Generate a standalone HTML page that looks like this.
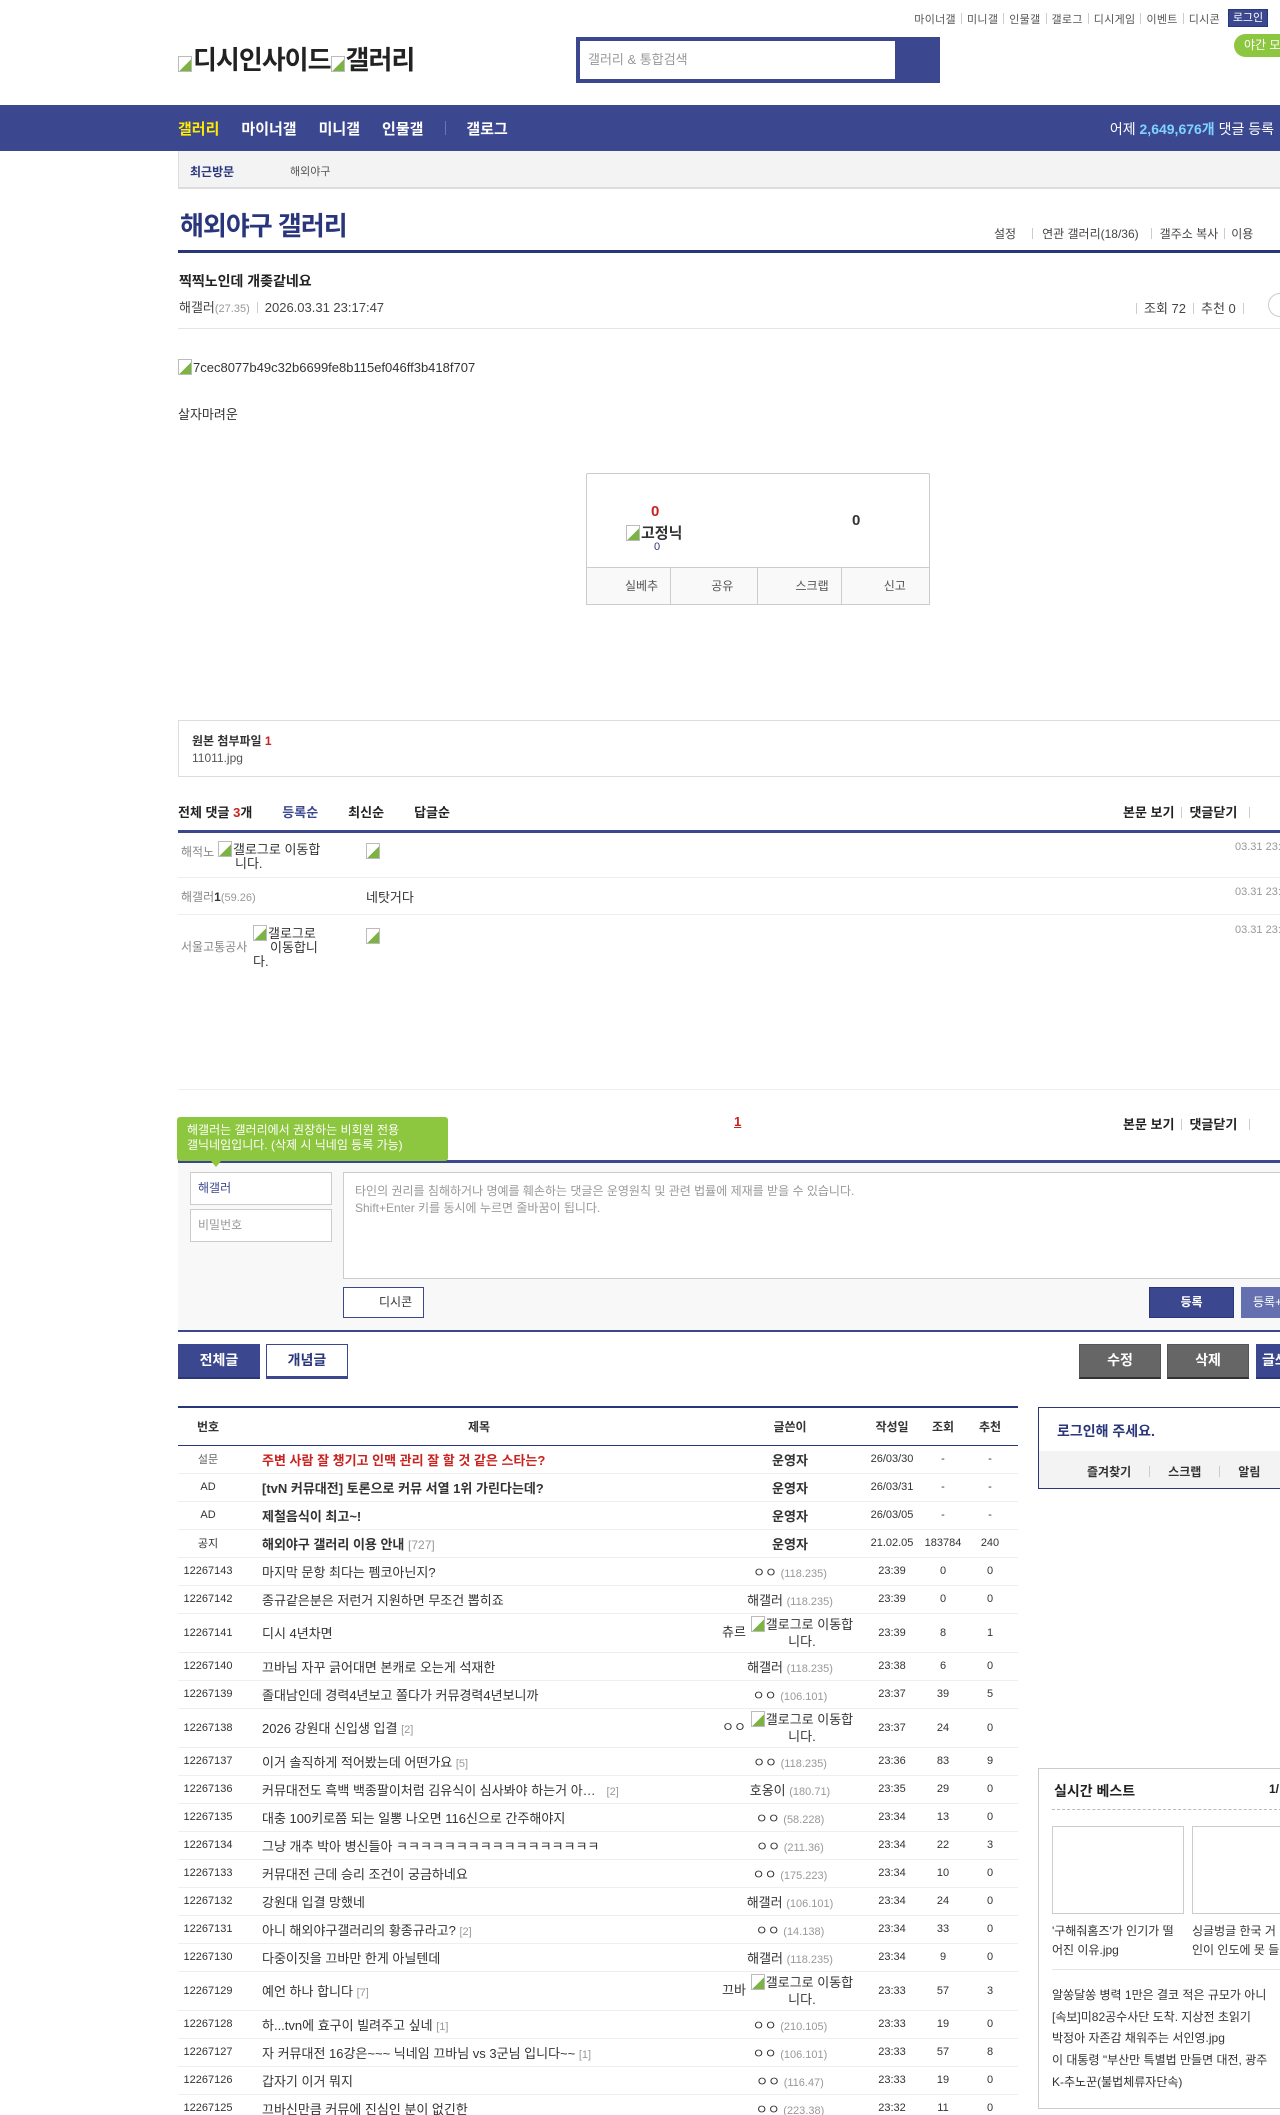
<!DOCTYPE html>
<html><head><meta charset="utf-8">
<style>
*{margin:0;padding:0;box-sizing:border-box}
html,body{width:1280px;height:2115px;overflow:hidden;background:#fff}
body{position:relative;font-family:"Liberation Sans","Noto Sans CJK KR",sans-serif;color:#333;font-size:12px}
.a{position:absolute;white-space:nowrap}
.bi{display:inline-block;width:14px;height:16px;border:1px solid #bbb;background:linear-gradient(135deg,#fff 55%,#7cb342 56%);vertical-align:-3px;margin-right:1px}
.sep{display:inline-block;width:1px;height:11px;background:#ccc;margin:0 7px;vertical-align:-1px}
table{border-collapse:collapse;table-layout:fixed}
td,th{text-align:center;font-size:11px;color:#333;border-bottom:1px solid #eee;padding:0;vertical-align:middle}
th{font-size:12px;font-weight:bold;height:38px;border-bottom:1px solid #29367c}
td.t{text-align:left;padding-left:24px;font-size:13px;color:#333;white-space:nowrap;overflow:hidden}
td.b{font-weight:bold;color:#333}
.ip{color:#999;font-size:11px}
.rp{color:#999;font-size:11px}
tr{height:28px}
tr.tall{height:39px}
.w{font-size:13px}
.gl{display:inline-block;width:112px;text-align:center;white-space:normal;line-height:17px;vertical-align:middle;font-size:13px}
</style></head><body>

<!-- top links -->
<div class="a" style="right:60px;top:11px;font-size:11px;color:#555;letter-spacing:0.3px">마이너갤<span class="sep" style="margin:0 5px"></span>미니갤<span class="sep" style="margin:0 5px"></span>인물갤<span class="sep" style="margin:0 5px"></span>갤로그<span class="sep" style="margin:0 5px"></span>디시게임<span class="sep" style="margin:0 5px"></span>이벤트<span class="sep" style="margin:0 5px"></span>디시콘</div>
<div class="a" style="left:1228px;top:9px;width:40px;height:18px;background:#3b4890;border:1px solid #29367c;color:#fff;font-size:11px;text-align:center;line-height:16px">로그인</div>
<div class="a" style="left:1234px;top:34px;width:60px;height:23px;background:#8dc63f;border-radius:12px;color:#fff;font-size:12px;line-height:23px;padding-left:10px">야간 모드</div>

<!-- logo -->
<div class="a" style="left:178px;top:40px;font-size:26px;color:#222;font-weight:bold;letter-spacing:-1px"><span class="bi"></span>디시인사이드<span class="bi"></span>갤러리</div>

<!-- search -->
<div class="a" style="left:576px;top:37px;width:364px;height:46px;background:#3b4890"></div>
<div class="a" style="left:580px;top:41px;width:315px;height:38px;background:#fff;color:#999;font-size:13px;line-height:38px;padding-left:8px">갤러리 &amp; 통합검색</div>

<!-- nav -->
<div class="a" style="left:0;top:105px;width:1280px;height:46px;background:#3b4890"></div>
<div class="a" style="left:178px;top:118px;font-size:15px;font-weight:bold;color:#fff"><span style="color:#ffea00">갤러리</span><span style="margin-left:22px">마이너갤</span><span style="margin-left:22px">미니갤</span><span style="margin-left:22px">인물갤</span><span style="display:inline-block;width:1px;height:14px;background:#6a76b0;margin:0 20px 0 22px;vertical-align:-1px"></span>갤로그</div>
<div class="a" style="right:6px;top:119px;font-size:14px;color:#fff">어제 <b style="color:#7fd4ff">2,649,676개</b> 댓글 등록</div>

<!-- recent -->
<div class="a" style="left:178px;top:151px;width:1102px;height:38px;background:#f3f3f3;border-bottom:2px solid #ddd;border-left:1px solid #ddd"></div>
<div class="a" style="left:190px;top:163px;font-size:12px;font-weight:bold;color:#29367c">최근방문</div>
<div class="a" style="left:290px;top:163px;font-size:11px;color:#555">해외야구</div>

<!-- title -->
<div class="a" style="left:180px;top:206px;font-size:26px;font-weight:bold;color:#29367c;letter-spacing:-1px">해외야구 갤러리</div>
<div class="a" style="left:994px;top:225px;font-size:12px;color:#444">설정<span class="sep" style="margin:0 9px 0 16px"></span>연관 갤러리(18/36)<span class="sep" style="margin:0 8px 0 12px"></span>갤주소 복사<span class="sep" style="margin:0 6px"></span>이용</div>
<div class="a" style="left:178px;top:250px;width:1102px;height:3px;background:#29367c"></div>

<div class="a" style="left:179px;top:271px;font-size:14px;font-weight:bold;color:#222">찍찍노인데 개좆같네요</div>
<div class="a" style="left:179px;top:297px;font-size:13px;color:#444">해갤러<span style="font-size:11px;color:#999">(27.35)</span><span class="sep"></span>2026.03.31 23:17:47</div>
<div class="a" style="left:1136px;top:298px;font-size:13px;color:#444"><span class="sep" style="margin-left:0"></span>조회 72<span class="sep"></span>추천 0<span class="sep"></span></div>
<div class="a" style="left:1268px;top:293px;width:24px;height:24px;border:1px solid #ccc;border-radius:12px"></div>
<div class="a" style="left:178px;top:328px;width:1102px;height:1px;background:#e5e5e5"></div>

<div class="a" style="left:178px;top:359px;font-size:13px;color:#333"><span class="bi"></span>7cec8077b49c32b6699fe8b115ef046ff3b418f707</div>
<div class="a" style="left:178px;top:404px;font-size:13px;color:#333">살자마려운</div>

<!-- recommend box -->
<div class="a" style="left:586px;top:473px;width:344px;height:132px;border:1px solid #ccc;border-radius:2px"></div>
<div class="a" style="left:651px;top:503px;font-size:15px;font-weight:bold;color:#c9221f">0</div>
<div class="a" style="left:626px;top:522px;font-size:15px;font-weight:bold;color:#333"><span class="bi"></span>고정닉</div>
<div class="a" style="left:654px;top:541px;font-size:11px;color:#29367c">0</div>
<div class="a" style="left:852px;top:512px;font-size:15px;font-weight:bold;color:#333">0</div>
<div class="a" style="left:586px;top:567px;width:344px;height:38px;border:1px solid #ccc;background:#f9f9f9;display:flex;font-size:12px;color:#555">
<div style="flex:1;border-right:1px solid #ccc;line-height:36px;padding-left:38px">실베추</div>
<div style="flex:1;border-right:1px solid #ccc;line-height:36px;padding-left:40px">공유</div>
<div style="flex:1;border-right:1px solid #ccc;line-height:36px;padding-left:38px">스크랩</div>
<div style="flex:1;line-height:36px;padding-left:42px">신고</div></div>

<!-- attachment -->
<div class="a" style="left:178px;top:720px;width:1110px;height:57px;border:1px solid #ddd"></div>
<div class="a" style="left:192px;top:732px;font-size:12px;font-weight:bold;color:#333">원본 첨부파일 <span style="color:#c9221f">1</span></div>
<div class="a" style="left:192px;top:751px;font-size:12px;color:#555">11011.jpg</div>

<!-- comments -->
<div class="a" style="left:178px;top:802px;font-size:13px;font-weight:bold;color:#222">전체 댓글 <span style="color:#c9221f">3</span>개<span style="color:#3b4890;margin-left:30px">등록순</span><span style="margin-left:30px">최신순</span><span style="margin-left:30px">답글순</span></div>
<div class="a" style="left:1123px;top:802px;font-size:13px;font-weight:bold;color:#222">본문 보기<span class="sep"></span>댓글닫기<span class="sep" style="margin-left:12px"></span></div>
<div class="a" style="left:178px;top:830px;width:1102px;height:3px;background:#3b4890"></div>
<div class="a" style="left:181px;top:843px;font-size:12px;color:#888">해적노</div>
<div class="a" style="left:218px;top:841px;font-size:13px;color:#333;line-height:14px;width:110px;white-space:normal"><span class="bi"></span>갤로그로 이동합<br><span style="padding-left:17px">니다.</span></div>
<div class="a" style="left:366px;top:843px"><span class="bi"></span></div>
<div class="a" style="left:1235px;top:841px;font-size:11px;color:#999">03.31 23:</div>
<div class="a" style="left:178px;top:877px;width:1102px;height:1px;background:#eee"></div>
<div class="a" style="left:181px;top:888px;font-size:12px;color:#888">해갤러<b style="color:#333">1</b><span style="font-size:11px;color:#999">(59.26)</span></div>
<div class="a" style="left:366px;top:887px;font-size:13px;color:#333">네탓거다</div>
<div class="a" style="left:1235px;top:886px;font-size:11px;color:#999">03.31 23:</div>
<div class="a" style="left:178px;top:914px;width:1102px;height:1px;background:#eee"></div>
<div class="a" style="left:181px;top:938px;font-size:12px;color:#888">서울고통공사</div>
<div class="a" style="left:253px;top:925px;font-size:13px;color:#333;line-height:14px;width:80px;white-space:normal"><span class="bi"></span>갤로그로<br><span style="padding-left:17px">이동합니</span><br>다.</div>
<div class="a" style="left:366px;top:928px"><span class="bi"></span></div>
<div class="a" style="left:1235px;top:924px;font-size:11px;color:#999">03.31 23:</div>
<div class="a" style="left:178px;top:1089px;width:1102px;height:1px;background:#eee"></div>

<div class="a" style="left:734px;top:1114px;font-size:13px;font-weight:bold;color:#c9221f;text-decoration:underline">1</div>
<div class="a" style="left:1123px;top:1114px;font-size:13px;font-weight:bold;color:#222">본문 보기<span class="sep"></span>댓글닫기<span class="sep" style="margin-left:12px"></span></div>

<!-- comment form -->
<div class="a" style="left:178px;top:1160px;width:1102px;height:3px;background:#3b4890"></div>
<div class="a" style="left:178px;top:1163px;width:1102px;height:167px;background:#f8f8f8"></div>
<div class="a" style="left:177px;top:1117px;width:271px;height:44px;background:#8dc63f;border-radius:3px;color:#fff;font-size:12px;line-height:15px;padding:6px 10px">해갤러는 갤러리에서 권장하는 비회원 전용<br>갤닉네임입니다. (삭제 시 닉네임 등록 가능)</div>
<div class="a" style="left:211px;top:1161px;width:0;height:0;border-left:5px solid transparent;border-right:5px solid transparent;border-top:6px solid #8dc63f"></div>
<div class="a" style="left:190px;top:1172px;width:142px;height:33px;border:1px solid #ccc;background:#fff;font-size:12px;color:#3b4890;line-height:31px;padding-left:7px">해갤러</div>
<div class="a" style="left:190px;top:1209px;width:142px;height:33px;border:1px solid #ccc;background:#fff;font-size:12px;color:#999;line-height:31px;padding-left:7px">비밀번호</div>
<div class="a" style="left:343px;top:1172px;width:945px;height:107px;border:1px solid #ccc;background:#fff;font-size:12px;color:#999;line-height:17px;padding:10px 11px;white-space:normal">타인의 권리를 침해하거나 명예를 훼손하는 댓글은 운영원칙 및 관련 법률에 제재를 받을 수 있습니다.<br>Shift+Enter 키를 동시에 누르면 줄바꿈이 됩니다.</div>
<div class="a" style="left:343px;top:1287px;width:81px;height:31px;border:1px solid #3b4890;background:#fff;font-size:12px;color:#333;line-height:29px;padding-left:35px">디시콘</div>
<div class="a" style="left:1149px;top:1287px;width:85px;height:31px;background:#3b4890;border:1px solid #29367c;color:#fff;font-size:12px;font-weight:bold;line-height:29px;text-align:center">등록</div>
<div class="a" style="left:1241px;top:1287px;width:85px;height:31px;background:#6470b0;color:#fff;font-size:12px;line-height:31px;padding-left:12px">등록+추천</div>
<div class="a" style="left:178px;top:1330px;width:1102px;height:2px;background:#3b4890"></div>

<!-- buttons -->
<div class="a" style="left:178px;top:1344px;width:82px;height:35px;background:#3b4890;border-bottom:2px solid #29367c;color:#fff;font-size:14px;font-weight:bold;text-align:center;line-height:33px">전체글</div>
<div class="a" style="left:266px;top:1344px;width:82px;height:35px;background:#fff;border:1px solid #3b4890;border-bottom:3px solid #3b4890;color:#29367c;font-size:14px;font-weight:bold;text-align:center;line-height:31px">개념글</div>
<div class="a" style="left:1079px;top:1344px;width:82px;height:35px;background:#666;border:1px solid #555;border-bottom:2px solid #333;color:#fff;font-size:14px;font-weight:bold;text-align:center;line-height:31px">수정</div>
<div class="a" style="left:1167px;top:1344px;width:82px;height:35px;background:#666;border:1px solid #555;border-bottom:2px solid #333;color:#fff;font-size:14px;font-weight:bold;text-align:center;line-height:31px">삭제</div>
<div class="a" style="left:1256px;top:1344px;width:82px;height:35px;background:#3b4890;border-bottom:2px solid #29367c;color:#fff;font-size:14px;font-weight:bold;line-height:33px;padding-left:6px">글쓰기</div>

<!-- list table -->
<table class="a" style="left:178px;top:1406px;width:840px;border-top:2px solid #29367c">
<colgroup><col style="width:60px"><col style="width:482px"><col style="width:140px"><col style="width:64px"><col style="width:38px"><col style="width:56px"></colgroup>
<tr><th>번호</th><th>제목</th><th>글쓴이</th><th>작성일</th><th>조회</th><th>추천</th></tr>
<tr><td style="color:#666">설문</td><td class="t" style="font-weight:bold;color:#c9221f">주변 사람 잘 챙기고 인맥 관리 잘 할 것 같은 스타는?</td><td class="b w">운영자</td><td>26/03/30</td><td>-</td><td>-</td></tr>
<tr><td>AD</td><td class="t" style="font-weight:bold">[tvN 커뮤대전] 토론으로 커뮤 서열 1위 가린다는데?</td><td class="b w">운영자</td><td>26/03/31</td><td>-</td><td>-</td></tr>
<tr><td>AD</td><td class="t" style="font-weight:bold">제철음식이 최고~!</td><td class="b w">운영자</td><td>26/03/05</td><td>-</td><td>-</td></tr>
<tr><td>공지</td><td class="t" style="font-weight:bold">해외야구 갤러리 이용 안내 <span class="rp" style="font-weight:normal;font-size:12px">[727]</span></td><td class="b w">운영자</td><td>21.02.05</td><td>183784</td><td>240</td></tr>
<tr><td>12267143</td><td class="t">마지막 문항 최다는 펨코아닌지?</td><td class="w">ㅇㅇ <span class="ip">(118.235)</span></td><td>23:39</td><td>0</td><td>0</td></tr>
<tr><td>12267142</td><td class="t">종규같은분은 저런거 지원하면 무조건 뽑히죠</td><td class="w">해갤러 <span class="ip">(118.235)</span></td><td>23:39</td><td>0</td><td>0</td></tr>
<tr class="tall"><td>12267141</td><td class="t">디시 4년차면</td><td class="w">츄르<span class="gl"><span class="bi"></span>갤로그로 이동합니다.</span></td><td>23:39</td><td>8</td><td>1</td></tr>
<tr><td>12267140</td><td class="t">끄바님 자꾸 긁어대면 본캐로 오는게 석재한</td><td class="w">해갤러 <span class="ip">(118.235)</span></td><td>23:38</td><td>6</td><td>0</td></tr>
<tr><td>12267139</td><td class="t">졸대남인데 경력4년보고 쫄다가 커뮤경력4년보니까</td><td class="w">ㅇㅇ <span class="ip">(106.101)</span></td><td>23:37</td><td>39</td><td>5</td></tr>
<tr class="tall"><td>12267138</td><td class="t">2026 강원대 신입생 입결 <span class="rp">[2]</span></td><td class="w">ㅇㅇ<span class="gl"><span class="bi"></span>갤로그로 이동합니다.</span></td><td>23:37</td><td>24</td><td>0</td></tr>
<tr><td>12267137</td><td class="t">이거 솔직하게 적어봤는데 어떤가요 <span class="rp">[5]</span></td><td class="w">ㅇㅇ <span class="ip">(118.235)</span></td><td>23:36</td><td>83</td><td>9</td></tr>
<tr><td>12267136</td><td class="t">커뮤대전도 흑백 백종팔이처럼 김유식이 심사봐야 하는거 아…&nbsp;&nbsp;&nbsp;<span class="rp">[2]</span></td><td class="w">호옹이 <span class="ip">(180.71)</span></td><td>23:35</td><td>29</td><td>0</td></tr>
<tr><td>12267135</td><td class="t">대충 100키로쯤 되는 일뽕 나오면 116신으로 간주해야지</td><td class="w">ㅇㅇ <span class="ip">(58.228)</span></td><td>23:34</td><td>13</td><td>0</td></tr>
<tr><td>12267134</td><td class="t">그냥 개추 박아 병신들아 ㅋㅋㅋㅋㅋㅋㅋㅋㅋㅋㅋㅋㅋㅋㅋㅋㅋ</td><td class="w">ㅇㅇ <span class="ip">(211.36)</span></td><td>23:34</td><td>22</td><td>3</td></tr>
<tr><td>12267133</td><td class="t">커뮤대전 근데 승리 조건이 궁금하네요</td><td class="w">ㅇㅇ <span class="ip">(175.223)</span></td><td>23:34</td><td>10</td><td>0</td></tr>
<tr><td>12267132</td><td class="t">강원대 입결 망했네</td><td class="w">해갤러 <span class="ip">(106.101)</span></td><td>23:34</td><td>24</td><td>0</td></tr>
<tr><td>12267131</td><td class="t">아니 해외야구갤러리의 황종규라고? <span class="rp">[2]</span></td><td class="w">ㅇㅇ <span class="ip">(14.138)</span></td><td>23:34</td><td>33</td><td>0</td></tr>
<tr><td>12267130</td><td class="t">다중이짓을 끄바만 한게 아닐텐데</td><td class="w">해갤러 <span class="ip">(118.235)</span></td><td>23:34</td><td>9</td><td>0</td></tr>
<tr class="tall"><td>12267129</td><td class="t">예언 하나 합니다 <span class="rp">[7]</span></td><td class="w">끄바<span class="gl"><span class="bi"></span>갤로그로 이동합니다.</span></td><td>23:33</td><td>57</td><td>3</td></tr>
<tr><td>12267128</td><td class="t">하...tvn에 효구이 빌려주고 싶네 <span class="rp">[1]</span></td><td class="w">ㅇㅇ <span class="ip">(210.105)</span></td><td>23:33</td><td>19</td><td>0</td></tr>
<tr><td>12267127</td><td class="t">자 커뮤대전 16강은~~~ 닉네임 끄바님 vs 3군님 입니다~~ <span class="rp">[1]</span></td><td class="w">ㅇㅇ <span class="ip">(106.101)</span></td><td>23:33</td><td>57</td><td>8</td></tr>
<tr><td>12267126</td><td class="t">갑자기 이거 뭐지</td><td class="w">ㅇㅇ <span class="ip">(116.47)</span></td><td>23:33</td><td>19</td><td>0</td></tr>
<tr><td>12267125</td><td class="t">끄바신만큼 커뮤에 진심인 분이 없긴한</td><td class="w">ㅇㅇ <span class="ip">(223.38)</span></td><td>23:32</td><td>11</td><td>0</td></tr>
</table>

<!-- sidebar login -->
<div class="a" style="left:1038px;top:1407px;width:260px;height:82px;border:1px solid #29367c;background:#fff"></div>
<div class="a" style="left:1039px;top:1451px;width:260px;height:37px;background:#f3f3f3"></div>
<div class="a" style="left:1057px;top:1421px;font-size:14px;font-weight:bold;color:#29367c">로그인해 주세요.</div>
<div class="a" style="left:1087px;top:1463px;font-size:12px;font-weight:bold;color:#333">즐겨찾기<span class="sep" style="margin:0 18px"></span>스크랩<span class="sep" style="margin:0 18px"></span>알림</div>

<!-- realtime best -->
<div class="a" style="left:1038px;top:1768px;width:260px;height:341px;border:1px solid #ccc"></div>
<div class="a" style="left:1054px;top:1781px;font-size:14px;font-weight:bold;color:#222">실시간 베스트</div>
<div class="a" style="left:1269px;top:1782px;font-size:12px;font-weight:bold;color:#222">1/</div>
<div class="a" style="left:1052px;top:1809px;width:230px;border-top:1px dashed #bbb"></div>
<div class="a" style="left:1052px;top:1826px;width:132px;height:88px;border:1px solid #ccc"></div>
<div class="a" style="left:1192px;top:1826px;width:132px;height:88px;border:1px solid #ccc"></div>
<div class="a" style="left:1052px;top:1922px;font-size:12px;color:#333;line-height:19px">'구해줘홈즈'가 인기가 떨<br>어진 이유.jpg</div>
<div class="a" style="left:1192px;top:1922px;font-size:12px;color:#333;line-height:19px">싱글벙글 한국 거<br>인이 인도에 못 들</div>
<div class="a" style="left:1052px;top:1969px;width:230px;height:1px;background:#e5e5e5"></div>
<div class="a" style="left:1052px;top:1985px;font-size:12px;color:#333;line-height:21.7px">알쏭달쏭 병력 1만은 결코 적은 규모가 아니<br>[속보]미82공수사단 도착. 지상전 초읽기<br>박정아 자존감 채워주는 서인영.jpg<br>이 대통령 "부산만 특별법 만들면 대전, 광주<br>K-추노꾼(불법체류자단속)</div>

</body></html>
